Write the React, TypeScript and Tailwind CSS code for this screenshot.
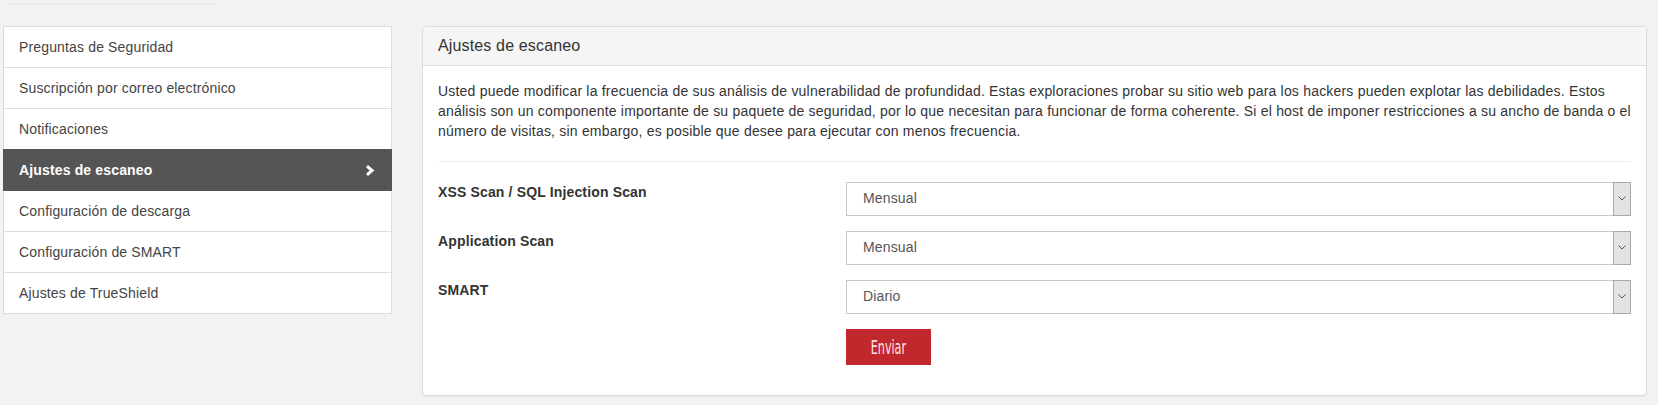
import React from 'react';

const MENU = [
  'Preguntas de Seguridad',
  'Suscripción por correo electrónico',
  'Notificaciones',
  'Ajustes de escaneo',
  'Configuración de descarga',
  'Configuración de SMART',
  'Ajustes de TrueShield',
];

const FIELDS = [
  { label: 'XSS Scan / SQL Injection Scan', value: 'Mensual' },
  { label: 'Application Scan', value: 'Mensual' },
  { label: 'SMART', value: 'Diario' },
];

const FakeSelect: React.FC<{ value: string }> = ({ value }) => (
  <div className="flex h-[34px] flex-1">
    <div className="flex flex-1 items-center border border-r-0 border-[#c8c8c8] bg-white pl-[16px] text-[#555]">
      {value}
    </div>
    <div className="flex w-[18px] items-center justify-center border border-[#a9a9a9] bg-[#e3e3e3]">
      <svg width="8" height="5" viewBox="0 0 8 5" fill="none">
        <path d="M0.5 0.5 L4 4 L7.5 0.5" stroke="#555" strokeWidth="1" />
      </svg>
    </div>
  </div>
);

export default function App() {
  const active = 'Ajustes de escaneo';

  return (
    <div className="min-h-[405px] bg-[#f2f2f2] font-['Liberation_Sans',Arial,sans-serif] text-[14px] tracking-[0.15px] text-[#333]">
      {/* faint strip left over from the tab bar above */}
      <div className="h-[26px] pl-[7px] pt-[3px]">
        <div className="h-[2px] w-[210px] bg-[#ebebeb]"></div>
      </div>

      <div className="flex items-start pl-[3px]">
        {/* Sidebar */}
        <aside className="flex w-[389px] flex-col">
          {MENU.map((item) => (
            <div
              key={item}
              className={`relative -mb-px flex h-[42px] items-center justify-between border px-[15px] ${
                item === active
                  ? 'z-10 border-[#555] bg-[#555] font-bold text-white'
                  : 'border-[#ddd] bg-white text-[#444]'
              }`}
            >
              <span>{item}</span>
              {item === active && (
                <svg width="10" height="11" viewBox="0 0 10 11" fill="none" className="mr-[1px]">
                  <path d="M2 1.2 L7 5.5 L2 9.8" stroke="#fff" strokeWidth="3" />
                </svg>
              )}
            </div>
          ))}
        </aside>

        {/* Panel */}
        <section className="ml-[30px] w-[1225px] rounded-[4px] border border-[#ddd] bg-white shadow-[0_1px_1px_rgba(0,0,0,0.05)]">
          <div className="rounded-t-[3px] border-b border-[#ddd] bg-[#f5f5f5] px-[15px] py-[10px]">
            <h3 className="text-[16px] leading-[1.1] text-[#333]">Ajustes de escaneo</h3>
          </div>

          <div className="p-[15px]">
            <p className="mb-[20px] leading-[20px] tracking-[0.2px]">
              Usted puede modificar la frecuencia de sus análisis de vulnerabilidad de profundidad. Estas exploraciones
              probar su sitio web para los hackers pueden explotar las debilidades. Estos
              <br />
              análisis son un componente importante de su paquete de seguridad, por lo que necesitan para funcionar de
              forma coherente. Si el host de imponer restricciones a su ancho de banda o el
              <br />
              número de visitas, sin embargo, es posible que desee para ejecutar con menos frecuencia.
            </p>
            <div className="mb-[20px] border-t border-[#eee]"></div>

            {FIELDS.map((field) => (
              <div key={field.label} className="mb-[15px] flex">
                <label className="w-[408px] font-bold leading-[20px] text-[#333]">{field.label}</label>
                <FakeSelect value={field.value} />
              </div>
            ))}

            <div className="mb-[15px] flex">
              <div className="w-[408px]"></div>
              <button className="flex h-[36px] w-[85px] items-center justify-center bg-[#c1272d]">
                <span className="inline-block scale-x-[0.62] font-['Liberation_Sans_Narrow','DejaVu_Sans_Condensed',sans-serif] text-[20px] tracking-normal text-[#fde6e6]">
                  Enviar
                </span>
              </button>
            </div>
          </div>
        </section>
      </div>
    </div>
  );
}
